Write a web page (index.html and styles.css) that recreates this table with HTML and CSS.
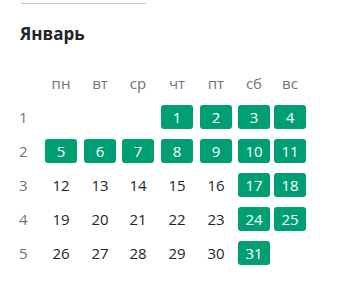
FILE: index.html
```html
<!DOCTYPE html>
<html lang="ru">
<head>
<meta charset="utf-8">
<link rel="stylesheet" href="styles.css">
</head>
<body>
<div class="field"></div>
<h2 class="month">Январь</h2>
<div class="cal">
  <div class="hd wk"></div>
  <div class="hd">пн</div><div class="hd">вт</div><div class="hd">ср</div><div class="hd">чт</div><div class="hd">пт</div><div class="hd">сб</div><div class="hd">вс</div>

  <div class="wk">1</div>
  <div class="d"></div><div class="d"></div><div class="d"></div><div class="d on">1</div><div class="d on">2</div><div class="d on">3</div><div class="d on">4</div>

  <div class="wk">2</div>
  <div class="d on">5</div><div class="d on">6</div><div class="d on">7</div><div class="d on">8</div><div class="d on">9</div><div class="d on">10</div><div class="d on">11</div>

  <div class="wk">3</div>
  <div class="d">12</div><div class="d">13</div><div class="d">14</div><div class="d">15</div><div class="d">16</div><div class="d on">17</div><div class="d on">18</div>

  <div class="wk">4</div>
  <div class="d">19</div><div class="d">20</div><div class="d">21</div><div class="d">22</div><div class="d">23</div><div class="d on">24</div><div class="d on">25</div>

  <div class="wk">5</div>
  <div class="d">26</div><div class="d">27</div><div class="d">28</div><div class="d">29</div><div class="d">30</div><div class="d on">31</div><div class="d"></div>
</div>
</body>
</html>
```
FILE: styles.css
```css
html, body {
  margin: 0;
  padding: 0;
  background: #fff;
}
body {
  font-family: "Open Sans", "Noto Sans", sans-serif;
  font-size: 15px;
  color: #212529;
}
.field {
  width: 125px;
  height: 3px;
  margin-left: 21px;
  border-bottom: 1px solid #c8c8c8;
}
.month {
  margin: 18px 0 0 20px;
  font-size: 17px;
  line-height: 24px;
  font-weight: 700;
  color: #212529;
}
.cal {
  margin: 25px 0 0 19px;
  display: grid;
  grid-template-columns: 22px 39px 38px 39px 39px 38px 36px 36px;
  grid-auto-rows: 24px;
  row-gap: 10px;
}
.hd {
  color: #6c757d;
  margin-left: 4px;
  width: 32px;
  text-align: center;
  line-height: 24px;
  margin-bottom: 4px;
}
.hd.wk {
  margin-left: 0;
}
.wk {
  color: #6c757d;
  line-height: 24px;
}
.d {
  margin-left: 4px;
  width: 32px;
  height: 24px;
  line-height: 24px;
  text-align: center;
  border-radius: 3px;
}
.d.on {
  background: #009e73;
  color: #fff;
}
```
